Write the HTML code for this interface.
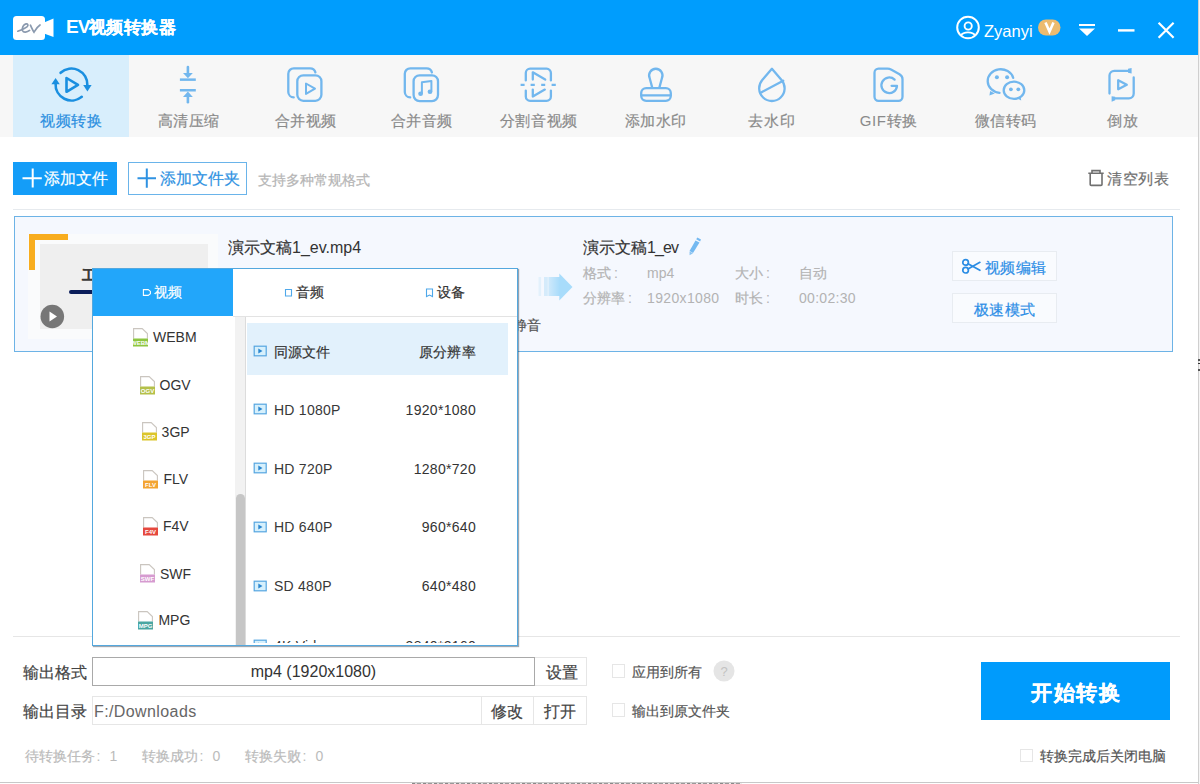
<!DOCTYPE html>
<html><head><meta charset="utf-8">
<style>
*{margin:0;padding:0;box-sizing:border-box}
html,body{width:1200px;height:784px;overflow:hidden;background:#fff;font-family:"Liberation Sans",sans-serif;color:#333;-webkit-font-smoothing:antialiased}
.c{-webkit-text-stroke-width:0.2px}
.a{position:absolute}
.nw{white-space:nowrap}
#hdr{left:0;top:0;width:1198px;height:55px;background:#009dfd}
#tb{left:0;top:55px;width:1198px;height:82px;background:#f7f7f7}
.ti{position:absolute;top:0;height:82px;width:117px;text-align:center;font-size:15px;letter-spacing:0.6px;text-indent:0.6px;color:#8a8a8a}
.ti > span{position:absolute;left:0;right:0;top:56px;line-height:20px;white-space:nowrap}
.sel{background:#d8eefc;color:#2a8ee0}
#rb{left:1198px;top:0;width:1px;height:784px;background:#cfcfcf}
#rb2{left:1199px;top:0;width:1px;height:784px;background:#f4f4f4}
svg.ic{position:absolute;top:60px;width:50px;height:50px;overflow:visible}
.ic *{fill:none;stroke:#72b7ee;stroke-width:2.3;stroke-linecap:round;stroke-linejoin:round}
.ic .f{fill:#72b7ee;stroke:none}
</style></head><body>
<div id="hdr" class="a"></div>
<div id="rb" class="a"></div><div id="rb2" class="a"></div>

<!-- header -->
<svg class="a" style="left:0;top:0" width="60" height="55">
  <rect x="13" y="16" width="32" height="24" rx="3.5" fill="#fff"/>
  <polygon points="44,22.5 53.5,18.5 53.5,37 44,33.5" fill="#fff"/>
  <path d="M17.8,31.2 C21,30 25,28.5 27.2,26.6 C28.6,25.3 27.8,23.6 26,23.9 C23.5,24.4 21.6,28 22.6,30.8 C23.4,32.8 27,32.4 29.6,30.4 M30.4,25.2 C31.5,27.5 32.8,30.5 34,32.2 C35.5,29.6 37.5,26.6 40,25" fill="none" stroke="#8a99ae" stroke-width="1.7" stroke-linecap="round"/>
</svg>
<div class="a nw" style="left:66px;top:15px;font-size:19px;line-height:24px;font-weight:bold;color:#fff;letter-spacing:-1px">EV</div>
<div class="a nw" style="left:88.5px;top:16px;font-size:17px;line-height:24px;letter-spacing:0.6px;font-weight:bold;color:#fff"><span class="c">视频转换器</span></div>

<svg class="a" style="left:950px;top:10px" width="240" height="40">
  <circle cx="18" cy="17.5" r="10.8" fill="none" stroke="#fff" stroke-width="2"/>
  <circle cx="18.2" cy="16" r="3.6" fill="none" stroke="#fff" stroke-width="1.9"/>
  <path d="M11,25.5 C13,21.3 23,21.3 25,25.5" fill="none" stroke="#fff" stroke-width="1.9"/>
  <rect x="88" y="9.5" width="22.5" height="16" rx="8" fill="#ecbb6f"/>
  <path d="M95.5,12.5 L99.5,21.5 L103.5,12.5" fill="none" stroke="#fff" stroke-width="2.6"/>
  <rect x="129" y="14" width="16" height="2" fill="#fff"/>
  <polygon points="129,18.5 145,18.5 137,26" fill="#fff"/>
  <rect x="168" y="19.2" width="16.5" height="2.4" fill="#fff"/>
  <path d="M208.6,12.8 L223.6,27.8 M223.6,12.8 L208.6,27.8" stroke="#fff" stroke-width="2.2"/>
</svg>
<div class="a nw" style="left:984px;top:21px;font-size:16.5px;line-height:20px;color:#fff">Zyanyi</div>

<!-- toolbar -->
<div id="tb" class="a">
  <div class="ti sel" style="left:13px;width:116px"><span><span class="c">视频转换</span></span></div>
  <div class="ti" style="left:130px"><span><span class="c">高清压缩</span></span></div>
  <div class="ti" style="left:247px"><span><span class="c">合并视频</span></span></div>
  <div class="ti" style="left:363px"><span><span class="c">合并音频</span></span></div>
  <div class="ti" style="left:480px"><span><span class="c">分割音视频</span></span></div>
  <div class="ti" style="left:597px"><span><span class="c">添加水印</span></span></div>
  <div class="ti" style="left:713px"><span><span class="c">去水印</span></span></div>
  <div class="ti" style="left:830px"><span>GIF<span class="c">转换</span></span></div>
  <div class="ti" style="left:947px"><span><span class="c">微信转码</span></span></div>
  <div class="ti" style="left:1064px"><span><span class="c">倒放</span></span></div>
</div>

<svg class="ic" style="left:46px" viewBox="0 0 50 50">
  <g style="stroke:#1a8fe0">
  <path d="M14.6,12.8 A16,16 0 0 1 41.4,25.5" style="stroke:#1a8fe0;stroke-width:2.6"/>
  <path d="M35.8,36.8 A16,16 0 0 1 9.6,23.5" style="stroke:#1a8fe0;stroke-width:2.6"/>
  <polygon class="f" style="fill:#1a8fe0" points="37.2,25 45.6,25 41.4,31.5"/>
  <polygon class="f" style="fill:#1a8fe0" points="5.4,24.2 13.8,24.2 9.6,18"/>
  <polygon points="20.5,18 20.5,31.8 32,24.9" style="stroke:#1a8fe0;stroke-width:2.6"/>
  </g>
</svg>
<svg class="ic" style="left:163px" viewBox="0 0 50 50">
  <path d="M24.9,7 V14" style="stroke-width:2.6"/>
  <polygon class="f" points="20,13 29.8,13 24.9,18.3"/>
  <rect class="f" x="16.9" y="18.4" width="15.9" height="2.5"/>
  <rect class="f" x="16.9" y="29" width="15.9" height="2.5"/>
  <polygon class="f" points="20,36.9 29.8,36.9 24.9,31.5"/>
  <path d="M24.9,36 V42.2" style="stroke-width:2.6"/>
</svg>
<svg class="ic" style="left:280px" viewBox="0 0 50 50">
  <path d="M13.7,37.4 A5.5,5.5 0 0 1 8.3,32 V13.8 A5.5,5.5 0 0 1 13.8,8.3 H30 A5.5,5.5 0 0 1 35.4,12.4"/>
  <rect x="17.3" y="15.3" width="24.1" height="25.5" rx="6"/>
  <polygon points="26,23.5 26,33.9 35,28.7" style="stroke-width:2"/>
</svg>
<svg class="ic" style="left:397px" viewBox="0 0 50 50">
  <path d="M13.2,37.4 A5.5,5.5 0 0 1 7.8,32 V13.8 A5.5,5.5 0 0 1 13.3,8.3 H29.5 A5.5,5.5 0 0 1 34.9,12.4"/>
  <rect x="16.6" y="15.3" width="24.4" height="25.8" rx="6"/>
  <path d="M24.9,33 V22.2 L34.4,21 V31" style="stroke-width:2"/>
  <ellipse class="f" cx="23.6" cy="33.8" rx="2.4" ry="2.2"/>
  <ellipse class="f" cx="33" cy="31.8" rx="2.4" ry="2.2"/>
</svg>
<svg class="ic" style="left:513px" viewBox="0 0 50 50">
  <path d="M12.8,20.4 V13 A4.3,4.3 0 0 1 17.1,8.7 H33.6 A4.3,4.3 0 0 1 37.9,13 V20.4"/>
  <path d="M12.8,30.6 V36.5 A4.3,4.3 0 0 0 17.1,40.8 H33.6 A4.3,4.3 0 0 0 37.9,36.5 V30.6"/>
  <path d="M7.6,24.9 H11.6 M17.6,24.9 H21.8 M28.2,24.9 H32.2 M38.6,24.9 H42.8" style="stroke-width:2.4;stroke-linecap:butt"/>
  <path d="M19.8,19.6 V12.3 L32.2,19.6"/>
  <path d="M19.8,29.6 V36.6 L31.8,29.6"/>
</svg>
<svg class="ic" style="left:630px" viewBox="0 0 50 50">
  <path d="M22.3,27.9 L19.7,18.2 A6.7,6.7 0 1 1 31.9,18.2 L29.3,27.9"/>
  <rect x="11.2" y="28.1" width="29.6" height="12.7" rx="5"/>
  <path d="M11.5,35.4 H40.5"/>
</svg>
<svg class="ic" style="left:747px" viewBox="0 0 50 50">
  <path d="M24.9,8.8 L15.26,20.03 A12.7,12.7 0 1 0 34.54,20.03 Z"/>
  <path d="M14.2,32.4 L36.2,20.8"/>
</svg>
<svg class="ic" style="left:863px" viewBox="0 0 50 50">
  <path d="M15.5,8.7 H24.5 Q26.5,8.7 28.5,9.8 L36.5,14.2 Q39.5,16 39.5,19 V36.8 A4,4 0 0 1 35.5,40.8 H15.5 A4,4 0 0 1 11.5,36.8 V12.7 A4,4 0 0 1 15.5,8.7 Z"/>
  <path d="M31.6,19.6 A7.8,7.8 0 1 0 34,25.8 H28.6"/>
</svg>
<svg class="ic" style="left:980px" viewBox="0 0 50 50">
  <path d="M33.2,17.8 A13,11.8 0 1 0 19.5,32.8"/>
  <path class="f" d="M10.2,31 L9.4,35.6 L14.8,33.6 Z"/>
  <circle class="f" cx="16.9" cy="17.3" r="2"/>
  <circle class="f" cx="27.1" cy="17.3" r="2"/>
  <ellipse cx="34" cy="30.3" rx="10.3" ry="8.6"/>
  <path class="f" d="M37.5,38.5 L41.2,40.6 L40.6,37 Z"/>
  <circle class="f" cx="30.9" cy="29.3" r="1.9"/>
  <circle class="f" cx="38.3" cy="29.3" r="1.9"/>
</svg>
<svg class="ic" style="left:1097px" viewBox="0 0 50 50">
  <path d="M32.5,10.8 H17.3 A4.8,4.8 0 0 0 12.5,15.6 V33.6"/>
  <path class="f" d="M31,8.8 L34.6,8 L34.6,13.4 L31,12.8 Z"/>
  <path d="M36.7,17.4 V33.5 A4.8,4.8 0 0 1 31.9,38.3 H16.5"/>
  <path class="f" d="M14.6,36.3 L18.2,36.8 L18.2,40.2 L14.6,41.8 Z"/>
  <polygon points="21.2,20.2 21.2,29.3 29.8,24.7"/>
</svg>

<!-- action row -->
<div class="a" style="left:13px;top:162px;width:104px;height:33px;background:#149df8"></div>
<svg class="a" style="left:13px;top:162px" width="30" height="32"><path d="M19.7,6.5 V25.5 M9.5,16.3 H28.8" stroke="#fff" stroke-width="2"/></svg>
<div class="a nw" style="left:44px;top:169px;font-size:16px;line-height:20px;color:#fff"><span class="c">添加文件</span></div>
<div class="a" style="left:128px;top:162px;width:119px;height:33px;border:1px solid #6ab4ea;background:#fff"></div>
<svg class="a" style="left:128px;top:162px" width="30" height="32"><path d="M18.8,6.5 V25.8 M9.5,16.3 H28" stroke="#2f92e2" stroke-width="2"/></svg>
<div class="a nw" style="left:160px;top:169px;font-size:16px;line-height:20px;color:#2f92e2"><span class="c">添加文件夹</span></div>
<div class="a nw" style="left:258px;top:170px;font-size:14px;line-height:20px;color:#b5b5b5"><span class="c">支持多种常规格式</span></div>
<svg class="a" style="left:1086px;top:168px" width="20" height="20">
  <path d="M2.3,5.2 H17.7 M6,5.2 V2.6 H14 V5.2 M4.2,5.2 V16.4 A1,1 0 0 0 5.2,17.4 H15 A1,1 0 0 0 16,16.4 V5.2" fill="none" stroke="#707070" stroke-width="1.6"/>
</svg>
<div class="a nw" style="left:1107px;top:169px;font-size:15px;letter-spacing:0.5px;line-height:20px;color:#707070"><span class="c">清空列表</span></div>
<div class="a" style="left:13px;top:209px;width:1167px;height:1px;background:#e6eaee"></div>

<!-- file item -->
<div class="a" style="left:14px;top:216px;width:1159px;height:136px;border:1px solid #6db3e6;background:#f5f8fe"></div>
<div class="a" style="left:28px;top:234px;width:190px;height:105px;background:#fafbfc"></div>
<div class="a" style="left:40px;top:244px;width:168px;height:85px;background:#efefef"></div>
<div class="a" style="left:29px;top:234px;width:39px;height:6px;background:#f8ad1f"></div>
<div class="a" style="left:29px;top:234px;width:6px;height:36px;background:#f8ad1f"></div>
<div class="a nw" style="left:82px;top:266.5px;font-size:13.5px;line-height:18px;color:#3a3a3a;font-weight:bold"><span class="c">工</span></div>
<div class="a" style="left:69px;top:289.5px;width:100px;height:4px;background:#0b1d5a;border-radius:2px"></div>
<svg class="a" style="left:40px;top:304px" width="25" height="25"><circle cx="12.3" cy="12.5" r="11.8" fill="#777"/><polygon points="9.5,7.5 9.5,17.5 17,12.5" fill="#fff"/></svg>

<div class="a nw" style="left:228px;top:237.8px;font-size:16px;line-height:20px;color:#333"><span class="c">演示文稿</span>1_ev.mp4</div>
<div class="a nw" style="left:512.5px;top:315px;font-size:14px;line-height:20px;color:#555"><span class="c">静音</span></div>

<svg class="a" style="left:536px;top:272px" width="40" height="30">
  <defs><linearGradient id="ag" x1="0" x2="1"><stop offset="0" stop-color="#cfe9fb"/><stop offset="1" stop-color="#a6dbfb"/></linearGradient></defs>
  <rect x="2.5" y="5" width="2.6" height="19" fill="#e3f1fc"/>
  <rect x="8" y="5" width="3.8" height="19" fill="#d5ebfb"/>
  <rect x="12.4" y="5" width="12" height="19" fill="url(#ag)"/>
  <polygon points="23.3,1.6 36.5,15 23.3,28.4" fill="#a8dcfb"/>
</svg>
<div class="a nw" style="left:583px;top:237.8px;font-size:16px;line-height:20px;color:#333"><span class="c">演示文稿</span><span style="letter-spacing:-0.9px">1_ev</span></div>
<svg class="a" style="left:686px;top:236px" width="18" height="20">
  <polygon points="9.5,4.5 13.5,6.5 7,17 3.5,15" fill="#74b9f1"/>
  <polygon points="3.5,15.5 7,17.3 3.6,19.2" fill="#8cc4f0"/>
  <polygon points="10.2,3.2 11.3,1.6 15,3.6 14.1,5.4" fill="#74b9f1"/>
</svg>
<div class="a nw" style="left:583px;top:263px;font-size:14px;line-height:20px;color:#b3b3b3"><span class="c">格式</span><span style="margin-left:3px">:</span></div>
<div class="a nw" style="left:647px;top:263px;font-size:14px;line-height:20px;color:#b3b3b3">mp4</div>
<div class="a nw" style="left:735px;top:263px;font-size:14px;line-height:20px;color:#b3b3b3"><span class="c">大小</span><span style="margin-left:3px">:</span></div>
<div class="a nw" style="left:799px;top:263px;font-size:14px;line-height:20px;color:#b3b3b3"><span class="c">自动</span></div>
<div class="a nw" style="left:583px;top:288px;font-size:14px;line-height:20px;color:#b3b3b3"><span class="c">分辨率</span><span style="margin-left:3px">:</span></div>
<div class="a nw" style="left:647px;top:288px;font-size:14px;line-height:20px;color:#b3b3b3;letter-spacing:0.35px">1920x1080</div>
<div class="a nw" style="left:735px;top:288px;font-size:14px;line-height:20px;color:#b3b3b3"><span class="c">时长</span><span style="margin-left:3px">:</span></div>
<div class="a nw" style="left:799px;top:288px;font-size:14px;line-height:20px;color:#b3b3b3;letter-spacing:0.3px">00:02:30</div>

<div class="a" style="left:952px;top:251px;width:105px;height:30px;border:1px solid #e8ecf1;background:#f9fbfe"></div>
<svg class="a" style="left:960px;top:257px" width="24" height="20">
  <circle cx="5.6" cy="5.4" r="2.8" fill="none" stroke="#2b8de4" stroke-width="1.7"/>
  <circle cx="5.6" cy="13.2" r="2.8" fill="none" stroke="#2b8de4" stroke-width="1.7"/>
  <path d="M8,6.7 L19.9,13.3 M8,11.9 L19.9,5.3" stroke="#2b8de4" stroke-width="1.7" stroke-linecap="round"/>
</svg>
<div class="a nw" style="left:984.5px;top:257.5px;font-size:15px;letter-spacing:0.6px;line-height:20px;color:#2d8ee6"><span class="c">视频编辑</span></div>
<div class="a" style="left:952px;top:293px;width:105px;height:30px;border:1px solid #e8ecf1;background:#f9fbfe"></div>
<div class="a nw" style="left:973.5px;top:299.5px;font-size:15px;letter-spacing:0.6px;line-height:20px;color:#2d8ee6"><span class="c">极速模式</span></div>

<!-- bottom -->
<div class="a" style="left:13px;top:636px;width:1167px;height:1px;background:#e6e6e6"></div>
<div class="a nw" style="left:23px;top:662.6px;font-size:16px;line-height:20px;color:#444"><span class="c">输出格式</span></div>
<div class="a" style="left:92px;top:657px;width:443px;height:29px;border:1px solid #a9a9a9;background:#fff"></div>
<div class="a nw" style="left:92px;width:443px;top:662px;font-size:16px;line-height:20px;color:#333;text-align:center">mp4 (1920x1080)</div>
<div class="a" style="left:535px;top:657px;width:52px;height:29px;border:1px solid #e6e6e6;border-left:none;background:#fff"></div>
<div class="a nw" style="left:546px;top:662.6px;font-size:16px;line-height:20px;color:#444"><span class="c">设置</span></div>
<div class="a nw" style="left:23px;top:701.6px;font-size:16px;line-height:20px;color:#444"><span class="c">输出目录</span></div>
<div class="a" style="left:92px;top:696px;width:390px;height:29px;border:1px solid #e6e6e6;background:#fff"></div>
<div class="a nw" style="left:94px;top:701.6px;font-size:16px;line-height:20px;color:#666;letter-spacing:0.4px">F:/Downloads</div>
<div class="a" style="left:481px;top:696px;width:53px;height:29px;border:1px solid #e6e6e6;background:#fff"></div>
<div class="a nw" style="left:491px;top:701.6px;font-size:16px;line-height:20px;color:#444"><span class="c">修改</span></div>
<div class="a" style="left:533px;top:696px;width:54px;height:29px;border:1px solid #e6e6e6;background:#fff"></div>
<div class="a nw" style="left:544px;top:701.6px;font-size:16px;line-height:20px;color:#444"><span class="c">打开</span></div>

<div class="a" style="left:612px;top:664px;width:13px;height:14px;border:1px solid #e6e6e6"></div>
<div class="a nw" style="left:632px;top:662px;font-size:14px;line-height:20px;color:#555"><span class="c">应用到所有</span></div>
<svg class="a" style="left:713px;top:660px" width="22" height="22"><circle cx="11" cy="11" r="10.5" fill="#e5e5e5"/><text x="11" y="15.8" font-size="13" fill="#c2c2c2" text-anchor="middle" font-family="Liberation Sans">?</text></svg>
<div class="a" style="left:612px;top:703px;width:13px;height:14px;border:1px solid #e6e6e6"></div>
<div class="a nw" style="left:632px;top:701px;font-size:14px;line-height:20px;color:#555"><span class="c">输出到原文件夹</span></div>

<div class="a" style="left:981px;top:662px;width:189px;height:58px;background:#009bfc"></div>
<div class="a nw" style="left:981px;width:189px;top:681px;font-size:21px;line-height:24px;letter-spacing:1.5px;text-indent:1.5px;font-weight:bold;color:#fff;text-align:center"><span class="c">开始转换</span></div>
<div class="a" style="left:1020px;top:749px;width:13px;height:13px;border:1px solid #e6e6e6"></div>
<div class="a nw" style="left:1040px;top:746px;font-size:14px;line-height:20px;color:#555"><span class="c">转换完成后关闭电脑</span></div>

<div class="a nw" style="left:25px;top:746px;font-size:14px;line-height:20px;color:#bbb"><span class="c">待转换任务</span><span style="margin-left:1.5px">:</span><span style="margin-left:9px">1</span></div>
<div class="a nw" style="left:142px;top:746px;font-size:14px;line-height:20px;color:#bbb"><span class="c">转换成功</span><span style="margin-left:1.5px">:</span><span style="margin-left:9px">0</span></div>
<div class="a nw" style="left:245px;top:746px;font-size:14px;line-height:20px;color:#bbb"><span class="c">转换失败</span><span style="margin-left:1.5px">:</span><span style="margin-left:9px">0</span></div>
<div class="a" style="left:0;top:782px;width:1198px;height:1px;background:#c8c8c8"></div>

<div class="a" style="left:412px;top:783px;width:330px;height:1px;background:repeating-linear-gradient(90deg,#888 0 3px,#ddd 3px 5px,#999 5px 9px,#eee 9px 11px)"></div>
<div class="a" style="left:1198px;top:359px;width:2px;height:2px;background:#555"></div>
<div class="a" style="left:1198px;top:363px;width:2px;height:1px;background:#333"></div>
<div class="a" style="left:1198px;top:369px;width:2px;height:2px;background:#555"></div>
<!-- popup -->
<div id="pop" class="a" style="left:92px;top:268px;width:426px;height:378px;background:#fff;border:1px solid #54a8de;box-shadow:1px 1px 1px rgba(40,60,80,0.45)">
</div>
<div class="a" style="left:93px;top:269px;width:140px;height:47px;background:#22a6fa"></div>
<svg class="a" style="left:142px;top:288px" width="10" height="9"><path d="M1.4,1.6 H6.2 L8.4,3.4 V5.8 L6.2,7.4 H1.4 Z" fill="none" stroke="#fff" stroke-width="1.1"/></svg>
<div class="a nw" style="left:154px;top:282px;font-size:14px;line-height:20px;color:#fff"><span class="c">视频</span></div>
<div class="a" style="left:233px;top:316px;width:284px;height:1px;background:#e3e3e3"></div>
<svg class="a" style="left:284px;top:288px" width="10" height="10"><path d="M1.5,1.5 H7.5 V8 H1.5 Z" fill="none" stroke="#4fa8ea" stroke-width="1.1"/></svg>
<div class="a nw" style="left:296px;top:282px;font-size:14px;line-height:20px;color:#333"><span class="c">音频</span></div>
<svg class="a" style="left:425px;top:288px" width="10" height="10"><path d="M1.5,1 H7.5 V8.5 L4.5,7 L1.5,8.5 Z" fill="none" stroke="#4fa8ea" stroke-width="1.1"/></svg>
<div class="a nw" style="left:437px;top:282px;font-size:14px;line-height:20px;color:#333"><span class="c">设备</span></div>
<div class="a" style="left:235px;top:317px;width:10px;height:328px;background:#f2f2f2"></div>
<div class="a" style="left:245px;top:317px;width:1px;height:328px;background:#dcdcdc"></div>
<div class="a" style="left:236px;top:494px;width:9px;height:151px;background:#c6c6c6;border-radius:4.5px 4.5px 0 0"></div>
<svg class="a" style="left:133.0px;top:328.2px" width="15" height="19"><path d="M0.6,10.5 V0.6 H9.2 L14.4,5.6 V10.5" fill="#fff" stroke="#c4bfb8" stroke-opacity="0.9" stroke-width="1.1"/><rect x="0" y="10.5" width="15" height="8" fill="#8dc641"/><text x="7.5" y="17" font-size="6" fill="#fff" text-anchor="middle" font-family="Liberation Sans" font-weight="bold">WEBM</text></svg>
<div class="a nw" style="left:153.0px;top:327.0px;font-size:14px;line-height:20px;color:#333">WEBM</div>
<svg class="a" style="left:139.6px;top:375.6px" width="15" height="19"><path d="M0.6,10.5 V0.6 H9.2 L14.4,5.6 V10.5" fill="#fff" stroke="#c4bfb8" stroke-opacity="0.9" stroke-width="1.1"/><rect x="0" y="10.5" width="15" height="8" fill="#b4c04a"/><text x="7.5" y="17" font-size="6" fill="#fff" text-anchor="middle" font-family="Liberation Sans" font-weight="bold">OGV</text></svg>
<div class="a nw" style="left:159.6px;top:374.5px;font-size:14px;line-height:20px;color:#333">OGV</div>
<svg class="a" style="left:141.6px;top:422.0px" width="15" height="19"><path d="M0.6,10.5 V0.6 H9.2 L14.4,5.6 V10.5" fill="#fff" stroke="#c4bfb8" stroke-opacity="0.9" stroke-width="1.1"/><rect x="0" y="10.5" width="15" height="8" fill="#dcc52a"/><text x="7.5" y="17" font-size="6" fill="#fff" text-anchor="middle" font-family="Liberation Sans" font-weight="bold">3GP</text></svg>
<div class="a nw" style="left:161.6px;top:421.5px;font-size:14px;line-height:20px;color:#333">3GP</div>
<svg class="a" style="left:143.4px;top:469.7px" width="15" height="19"><path d="M0.6,10.5 V0.6 H9.2 L14.4,5.6 V10.5" fill="#fff" stroke="#c4bfb8" stroke-opacity="0.9" stroke-width="1.1"/><rect x="0" y="10.5" width="15" height="8" fill="#f3a432"/><text x="7.5" y="17" font-size="6" fill="#fff" text-anchor="middle" font-family="Liberation Sans" font-weight="bold">FLV</text></svg>
<div class="a nw" style="left:163.4px;top:469.0px;font-size:14px;line-height:20px;color:#333">FLV</div>
<svg class="a" style="left:143.0px;top:516.7px" width="15" height="19"><path d="M0.6,10.5 V0.6 H9.2 L14.4,5.6 V10.5" fill="#fff" stroke="#c4bfb8" stroke-opacity="0.9" stroke-width="1.1"/><rect x="0" y="10.5" width="15" height="8" fill="#e5483e"/><text x="7.5" y="17" font-size="6" fill="#fff" text-anchor="middle" font-family="Liberation Sans" font-weight="bold">F4V</text></svg>
<div class="a nw" style="left:163.0px;top:516.0px;font-size:14px;line-height:20px;color:#333">F4V</div>
<svg class="a" style="left:140.0px;top:564.4px" width="15" height="19"><path d="M0.6,10.5 V0.6 H9.2 L14.4,5.6 V10.5" fill="#fff" stroke="#c4bfb8" stroke-opacity="0.9" stroke-width="1.1"/><rect x="0" y="10.5" width="15" height="8" fill="#d69bd0"/><text x="7.5" y="17" font-size="6" fill="#fff" text-anchor="middle" font-family="Liberation Sans" font-weight="bold">SWF</text></svg>
<div class="a nw" style="left:160.0px;top:563.5px;font-size:14px;line-height:20px;color:#333">SWF</div>
<svg class="a" style="left:138.4px;top:610.8px" width="15" height="19"><path d="M0.6,10.5 V0.6 H9.2 L14.4,5.6 V10.5" fill="#fff" stroke="#c4bfb8" stroke-opacity="0.9" stroke-width="1.1"/><rect x="0" y="10.5" width="15" height="8" fill="#4aa6a2"/><text x="7.5" y="17" font-size="6" fill="#fff" text-anchor="middle" font-family="Liberation Sans" font-weight="bold">MPG</text></svg>
<div class="a nw" style="left:158.4px;top:610.0px;font-size:14px;line-height:20px;color:#333">MPG</div>
<div class="a" style="left:247px;top:323px;width:261px;height:52px;background:#e2f1fc"></div>
<div class="a" style="left:246px;top:317px;width:270px;height:326px;overflow:hidden"><div class="a" style="left:-246px;top:-317px;width:1200px;height:784px"><svg class="a" style="left:253px;top:345.3px" width="15" height="13"><rect x="1.2" y="1.2" width="12" height="9.6" fill="#d6f0fc" stroke="#56a6e0" stroke-width="1.2"/><polygon points="5.3,3.6 5.3,8.6 9.5,6.1" fill="#2a86d0"/></svg><div class="a nw" style="left:274px;top:341.8px;font-size:14px;line-height:20px;color:#333"><span class="c">同源文件</span></div><div class="a nw" style="left:376px;width:100px;text-align:right;top:341.8px;font-size:14px;line-height:20px;color:#333;letter-spacing:0.3px"><span class="c">原分辨率</span></div><svg class="a" style="left:253px;top:403.3px" width="15" height="13"><rect x="1.2" y="1.2" width="12" height="9.6" fill="#d6f0fc" stroke="#56a6e0" stroke-width="1.2"/><polygon points="5.3,3.6 5.3,8.6 9.5,6.1" fill="#2a86d0"/></svg><div class="a nw" style="left:274px;top:399.8px;font-size:14px;line-height:20px;color:#383838;letter-spacing:0.25px">HD 1080P</div><div class="a nw" style="left:376px;width:100px;text-align:right;top:399.8px;font-size:14px;line-height:20px;color:#333;letter-spacing:0.3px">1920*1080</div><svg class="a" style="left:253px;top:462.1px" width="15" height="13"><rect x="1.2" y="1.2" width="12" height="9.6" fill="#d6f0fc" stroke="#56a6e0" stroke-width="1.2"/><polygon points="5.3,3.6 5.3,8.6 9.5,6.1" fill="#2a86d0"/></svg><div class="a nw" style="left:274px;top:458.6px;font-size:14px;line-height:20px;color:#383838;letter-spacing:0.25px">HD 720P</div><div class="a nw" style="left:376px;width:100px;text-align:right;top:458.6px;font-size:14px;line-height:20px;color:#333;letter-spacing:0.3px">1280*720</div><svg class="a" style="left:253px;top:520.8px" width="15" height="13"><rect x="1.2" y="1.2" width="12" height="9.6" fill="#d6f0fc" stroke="#56a6e0" stroke-width="1.2"/><polygon points="5.3,3.6 5.3,8.6 9.5,6.1" fill="#2a86d0"/></svg><div class="a nw" style="left:274px;top:517.3px;font-size:14px;line-height:20px;color:#383838;letter-spacing:0.25px">HD 640P</div><div class="a nw" style="left:376px;width:100px;text-align:right;top:517.3px;font-size:14px;line-height:20px;color:#333;letter-spacing:0.3px">960*640</div><svg class="a" style="left:253px;top:579.6px" width="15" height="13"><rect x="1.2" y="1.2" width="12" height="9.6" fill="#d6f0fc" stroke="#56a6e0" stroke-width="1.2"/><polygon points="5.3,3.6 5.3,8.6 9.5,6.1" fill="#2a86d0"/></svg><div class="a nw" style="left:274px;top:576.1px;font-size:14px;line-height:20px;color:#383838;letter-spacing:0.25px">SD 480P</div><div class="a nw" style="left:376px;width:100px;text-align:right;top:576.1px;font-size:14px;line-height:20px;color:#333;letter-spacing:0.3px">640*480</div><svg class="a" style="left:253px;top:638.8px" width="15" height="13"><rect x="1.2" y="1.2" width="12" height="9.6" fill="#d6f0fc" stroke="#56a6e0" stroke-width="1.2"/><polygon points="5.3,3.6 5.3,8.6 9.5,6.1" fill="#2a86d0"/></svg><div class="a nw" style="left:274px;top:636px;font-size:14px;line-height:20px;color:#383838;letter-spacing:0.25px">4K Video</div><div class="a nw" style="left:376px;width:100px;text-align:right;top:636px;font-size:14px;line-height:20px;color:#333;letter-spacing:0.3px">3840*2160</div></div></div>
</body></html>
